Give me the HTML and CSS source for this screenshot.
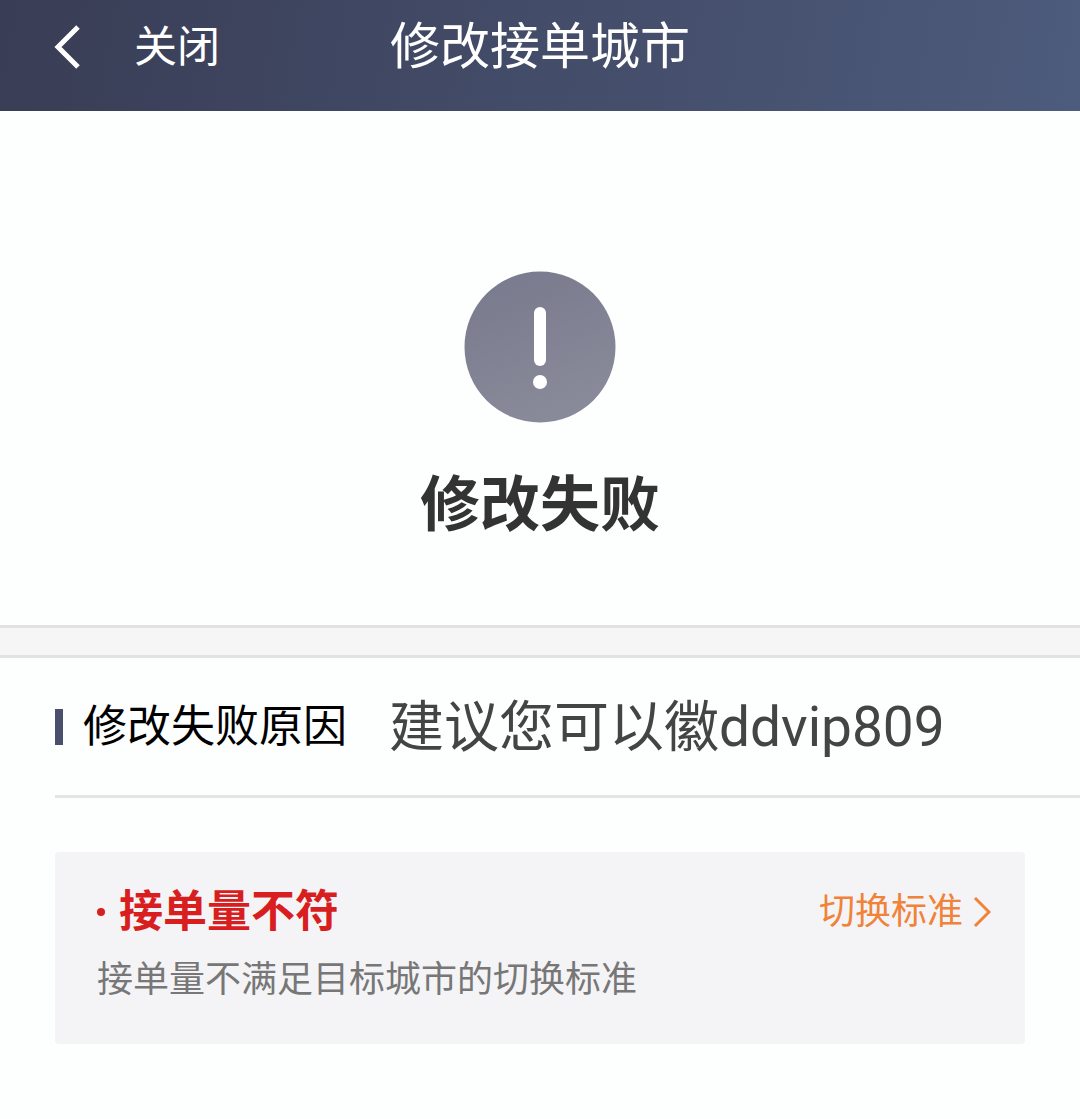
FILE: index.html
```html
<!DOCTYPE html>
<html lang="zh-CN">
<head>
  <meta charset="UTF-8" />
  <meta name="viewport" content="width=device-width, initial-scale=1" />
  <title>修改接单城市</title>
  <link rel="stylesheet" href="styles.css">
</head>
<body>
  <header class="topbar">
    <div class="nav">
      <button class="back" type="button" aria-label="返回">
        <svg width="28" height="46" viewBox="0 0 28 46"><path d="M25 3 5 23l20 20" /></svg>
      </button>
      <button class="close" type="button">关闭</button>
    </div>
    <h1>修改接单城市</h1>
  </header>

  <main>
    <section class="result">
      <svg class="result-icon" width="152" height="152" viewBox="0 0 152 152" aria-hidden="true">
        <defs>
          <linearGradient id="disc" x1="0.3" y1="0" x2="0.7" y2="1">
            <stop offset="0" stop-color="#797b8e" />
            <stop offset="1" stop-color="#8a8b9a" />
          </linearGradient>
        </defs>
        <circle cx="76" cy="76" r="75.5" fill="url(#disc)" />
        <rect x="70" y="36" width="12" height="59" rx="6" fill="#fff" />
        <circle cx="76" cy="111" r="7" fill="#fff" />
      </svg>
      <h2>修改失败</h2>
    </section>

    <section class="reason">
      <div class="reason-head">
        <h3>修改失败原因</h3>
        <p>建议您可以徽ddvip809</p>
      </div>
      <div class="card">
        <div class="card-head">
          <h4>接单量不符</h4>
          <a href="#">切换标准
            <svg width="18" height="32" viewBox="0 0 18 32"><path d="M2 2l14 14L2 30" /></svg>
          </a>
        </div>
        <p>接单量不满足目标城市的切换标准</p>
      </div>
    </section>
  </main>
</body>
</html>
```

FILE: styles.css
```css
* {
  box-sizing: border-box;
}

body {
  margin: 0;
  background: #fdfefe;
  color: #000;
  font-family: Roboto, "Noto Sans CJK SC", sans-serif;
}

h1, h2, h3, h4, p {
  margin: 0;
}

svg {
  display: block;
}

path {
  fill: none;
  stroke: currentColor;
}

.topbar {
  display: grid;
  grid-template-columns: 1fr auto 1fr;
  align-items: center;
  padding: 0 53px 18px;
  height: 111px;
  background: linear-gradient(100deg, #393d55, #4d5b7c);
  color: #fff;
}

.topbar h1 {
  font-size: 50px;
  font-weight: 400;
  line-height: 72px;
}

.nav {
  display: flex;
  align-items: center;
  gap: 53px;
}

.nav button {
  padding: 0;
  border: none;
  background: none;
  color: inherit;
  font-family: inherit;
  cursor: pointer;
}

.back path {
  stroke-width: 5;
}

.nav .close {
  font-size: 43px;
  line-height: 64px;
}

.result {
  display: flex;
  flex-direction: column;
  align-items: center;
  gap: 38px;
  padding: 160px 0 74px;
}

.result h2 {
  color: #333;
  font-size: 60px;
  font-weight: 700;
  line-height: 90px;
}

.reason::before {
  content: "";
  display: block;
  height: 27px;
  border: solid #e2e2e2;
  border-width: 3px 0;
  background: #f6f6f6;
}

.reason-head {
  display: flex;
  align-items: center;
  gap: 42px;
  height: 140px;
  margin-left: 55px;
  border-bottom: 3px solid #e4e4e4;
}

.reason-head h3 {
  display: flex;
  align-items: center;
  gap: 20px;
  font-size: 44px;
  font-weight: 400;
  line-height: 64px;
}

.reason-head h3::before {
  content: "";
  width: 8px;
  height: 36px;
  background: #4a4f6e;
}

.reason-head p {
  color: #444;
  font-size: 55px;
  line-height: 72px;
}

.card {
  margin: 54px 55px 0;
  padding: 28px 34px 32px 42px;
  border-radius: 4px;
  background: #f4f4f6;
}

.card-head {
  display: flex;
  justify-content: space-between;
  align-items: center;
  margin-bottom: 4px;
}

.card h4 {
  display: flex;
  align-items: center;
  gap: 14px;
  color: #d81e1e;
  font-size: 44px;
  line-height: 64px;
}

.card h4::before {
  content: "";
  width: 8px;
  height: 8px;
  border-radius: 50%;
  background: currentColor;
}

.card a {
  display: flex;
  align-items: center;
  gap: 10px;
  color: #f08239;
  font-size: 36px;
  line-height: 64px;
  text-decoration: none;
}

.card a path {
  stroke-width: 3;
}

.card p {
  color: #777;
  font-size: 36px;
  line-height: 64px;
}
```
